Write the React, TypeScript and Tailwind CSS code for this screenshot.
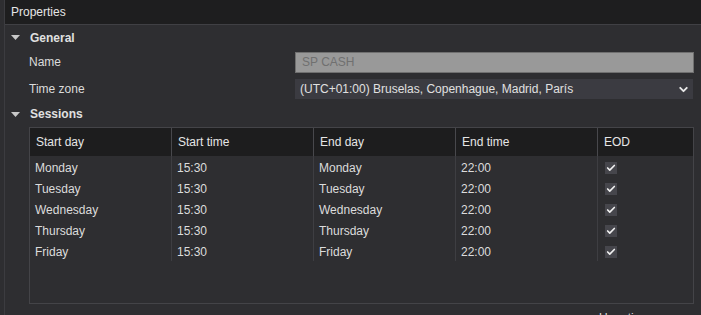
import { Check, ChevronDown } from 'lucide-react';

interface Session {
  startDay: string;
  startTime: string;
  endDay: string;
  endTime: string;
  eod: boolean;
}

const sessions: Session[] = [
  { startDay: 'Monday', startTime: '15:30', endDay: 'Monday', endTime: '22:00', eod: true },
  { startDay: 'Tuesday', startTime: '15:30', endDay: 'Tuesday', endTime: '22:00', eod: true },
  { startDay: 'Wednesday', startTime: '15:30', endDay: 'Wednesday', endTime: '22:00', eod: true },
  { startDay: 'Thursday', startTime: '15:30', endDay: 'Thursday', endTime: '22:00', eod: true },
  { startDay: 'Friday', startTime: '15:30', endDay: 'Friday', endTime: '22:00', eod: true },
];

const columns = ['Start day', 'Start time', 'End day', 'End time', 'EOD'];

function Caret() {
  return (
    <svg width="9" height="5" viewBox="0 0 9 5" className="shrink-0">
      <path d="M0 0 L9 0 L4.5 5 Z" fill="#c8c8c8" />
    </svg>
  );
}

export default function App() {
  return (
    <div
      className="h-[315px] w-[701px] overflow-hidden bg-[#2e2e31] text-[12px] text-[#dcdcdc] flex"
      style={{ fontFamily: '"Liberation Sans", Arial, sans-serif' }}
    >
      <div className="w-[4px] shrink-0" />
      <div className="flex-1 border-l border-[#3c3c40] flex flex-col">
        {/* Title bar */}
        <div className="h-[25px] shrink-0 bg-[#1e1e1f] border-b border-[#404044] flex items-center pl-[6px]">
          <span className="text-[#e6e6e6]">Properties</span>
        </div>

        {/* General */}
        <div className="h-[25px] shrink-0 flex items-center pl-[6px] gap-[10px]">
          <Caret />
          <span className="font-bold text-[#e0e0e0]">General</span>
        </div>
        <div className="h-[24px] shrink-0 flex items-center pl-[24px] pr-[7px]">
          <span className="w-[266px]">Name</span>
          <div className="flex-1 h-[21px] bg-[#999999] border border-[#707070] flex items-center px-[6px] text-[#707070]">
            SP CASH
          </div>
        </div>
        <div className="h-[30px] shrink-0 flex items-center pl-[24px]">
          <span className="w-[266px]">Time zone</span>
          <div className="w-[398px] h-[20px] bg-[#3b3b41] flex items-center justify-between pl-[5px] pr-[3px] text-[#e0e0e0]">
            <span>(UTC+01:00) Bruselas, Copenhague, Madrid, París</span>
            <ChevronDown size={13} strokeWidth={3.5} className="text-[#e8e8e8]" />
          </div>
        </div>

        {/* Sessions */}
        <div className="h-[20px] shrink-0 flex items-center pl-[6px] gap-[10px]">
          <Caret />
          <span className="font-bold text-[#e0e0e0]">Sessions</span>
        </div>
        <div className="ml-[24px] mt-[3px] w-[665px] h-[177px] shrink-0 border border-[#444448] flex flex-col">
          <div className="h-[28px] bg-[#1d1d1e] grid grid-cols-[142px_142px_142px_142px_1fr] shrink-0">
            {columns.map((c, i) => (
              <div
                key={c}
                className={`flex items-center pl-[6px] text-[#e6e6e6] ${i < columns.length - 1 ? 'border-r border-[#48484c]' : ''}`}
              >
                {c}
              </div>
            ))}
          </div>
          <div className="grid grid-cols-[142px_142px_142px_142px_1fr]">
            {sessions.map((s) => (
              <div key={s.startDay} className="contents">
                <div className="h-[21px] pt-[2px] flex items-center pl-[5px] border-r border-[#3e3e42]">{s.startDay}</div>
                <div className="h-[21px] pt-[2px] flex items-center pl-[5px] border-r border-[#3e3e42]">{s.startTime}</div>
                <div className="h-[21px] pt-[2px] flex items-center pl-[5px] border-r border-[#3e3e42]">{s.endDay}</div>
                <div className="h-[21px] pt-[2px] flex items-center pl-[5px] border-r border-[#3e3e42]">{s.endTime}</div>
                <div className="h-[21px] pt-[2px] flex items-center pl-[7px]">
                  <div className="w-[12px] h-[12px] bg-[#46464c] flex items-center justify-center">
                    {s.eod && <Check size={10} strokeWidth={4} className="text-[#f0f0f0]" />}
                  </div>
                </div>
              </div>
            ))}
          </div>
        </div>
        <div className="shrink-0 pl-[594px] mt-[5px] text-[#dcdcdc] whitespace-nowrap">Usar tiempo</div>
      </div>
    </div>
  );
}
